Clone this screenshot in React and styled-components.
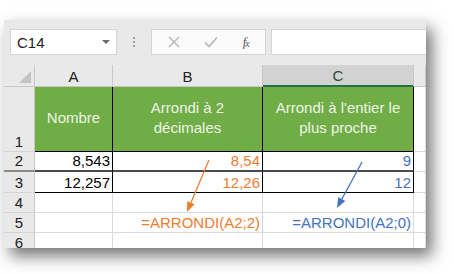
import React from 'react';
import styled, { createGlobalStyle } from 'styled-components';

const GlobalStyle = createGlobalStyle`
  html, body {
    margin: 0;
    padding: 0;
    background: #ffffff;
  }
  body {
    font-family: "Liberation Sans", Arial, sans-serif;
  }
`;

const Page = styled.div`
  width: 454px;
  height: 274px;
  padding: 20px 0 0 4px;
  box-sizing: border-box;
`;

const Window = styled.div`
  position: relative;
  width: 422px;
  height: 228px;
  background: #e9e9e9;
  box-shadow: 6px 8px 15px rgba(0, 0, 0, 0.55);
  overflow: hidden;
  display: flex;
  flex-direction: column;
`;

const FormulaBar = styled.div`
  height: 45px;
  box-sizing: border-box;
  padding: 9px 0 0 6px;
  display: flex;
  align-items: flex-start;
`;

const NameBox = styled.div`
  width: 107px;
  height: 26px;
  box-sizing: border-box;
  background: #ffffff;
  border: 1px solid #d4d4d4;
  display: flex;
  align-items: center;
  justify-content: space-between;
  padding: 0 6px 0 6px;
  font-size: 15px;
  color: #222;
`;

const DropArrow = styled.span`
  width: 0;
  height: 0;
  border-left: 4px solid transparent;
  border-right: 4px solid transparent;
  border-top: 4px solid #6a6a6a;
`;

const Grip = styled.div`
  width: 34px;
  height: 26px;
  display: flex;
  flex-direction: column;
  align-items: center;
  justify-content: center;
  gap: 2px;
  span {
    width: 2px;
    height: 2px;
    background: #9c9c9c;
  }
`;

const ButtonBox = styled.div`
  width: 115px;
  height: 26px;
  box-sizing: border-box;
  background: #fbfbfb;
  border: 1px solid #d4d4d4;
  display: flex;
  align-items: center;
  justify-content: space-around;
  padding: 0 4px;
`;

const Fx = styled.span`
  font-family: "Liberation Serif", "Times New Roman", serif;
  font-style: italic;
  font-size: 13px;
  color: #555;
  letter-spacing: -1px;
  sub {
    font-size: 10px;
    vertical-align: -1px;
  }
`;

const FormulaInput = styled.div`
  flex: 1;
  height: 26px;
  margin-left: 5px;
  box-sizing: border-box;
  background: #ffffff;
  border: 1px solid #d4d4d4;
  border-right: none;
`;

const Sheet = styled.div`
  position: relative;
  flex: 1;
  overflow: hidden;
  display: grid;
  grid-template-columns: 31px 78px 150px 151px 12px;
  grid-template-rows: 22px 65px 20px 21px 20px 20px 20px;
`;

const ColHead = styled.div`
  box-sizing: border-box;
  display: flex;
  align-items: center;
  justify-content: center;
  font-size: 15px;
  color: ${p => (p.$selected ? '#2a4a35' : '#222')};
  background: ${p => (p.$selected ? '#d2d2d2' : '#e9e9e9')};
  border-right: 1px solid #c8c8c8;
  border-bottom: ${p => (p.$selected ? '2px solid #217346' : '1px solid #c8c8c8')};
  padding-top: 1px;
`;

const Corner = styled.div`
  position: relative;
  box-sizing: border-box;
  background: #e9e9e9;
  border-right: 1px solid #c8c8c8;
  border-bottom: 1px solid #c8c8c8;
  &::after {
    content: '';
    position: absolute;
    right: 3px;
    bottom: 3px;
    width: 0;
    height: 0;
    border-left: 12px solid transparent;
    border-bottom: 12px solid #c4c4c4;
  }
`;

const RowHead = styled.div`
  box-sizing: border-box;
  display: flex;
  align-items: flex-end;
  justify-content: center;
  font-size: 15px;
  line-height: 17px;
  padding-bottom: 1px;
  color: #222;
  background: #e9e9e9;
  border-right: 1px solid #c8c8c8;
  border-bottom: ${p => (p.$thick ? '2px solid #8a8a8a' : '1px solid #d4d4d4')};
`;

const Cell = styled.div`
  box-sizing: border-box;
  display: flex;
  align-items: flex-end;
  justify-content: flex-end;
  padding: 0 2px 1px 2px;
  font-size: 15px;
  line-height: 17px;
  white-space: nowrap;
  background: #ffffff;
  color: ${p => p.$color || '#000'};
  border-right: 1px solid ${p => (p.$table ? '#000' : '#dadada')};
  border-bottom: ${p => p.$bottom || '1px solid #dadada'};
`;

const TitleCell = styled.div`
  box-sizing: border-box;
  display: flex;
  align-items: center;
  justify-content: center;
  text-align: center;
  font-size: 15px;
  line-height: 20px;
  color: #eef4e6;
  background: #70ad47;
  border-right: 1px solid #000;
  border-bottom: 1px solid #000;
  padding-bottom: 2px;
`;

const Arrows = styled.svg`
  position: absolute;
  left: 0;
  top: 0;
  pointer-events: none;
`;

const ORANGE = '#ed7d31';
const BLUE = '#4472c4';

const rows = [
  { n: '2', a: '8,543', b: '8,54', c: '9' },
  { n: '3', a: '12,257', b: '12,26', c: '12' },
];

function Arrow({ x1, y1, x2, y2, color }) {
  const ang = Math.atan2(y2 - y1, x2 - x1);
  const len = 10;
  const w = 4;
  const bx = x2 - len * Math.cos(ang);
  const by = y2 - len * Math.sin(ang);
  const px = -Math.sin(ang) * w;
  const py = Math.cos(ang) * w;
  return (
    <g>
      <line x1={x1} y1={y1} x2={bx} y2={by} stroke={color} strokeWidth="1.3" />
      <polygon points={`${x2},${y2} ${bx + px},${by + py} ${bx - px},${by - py}`} fill={color} />
    </g>
  );
}

export default function App() {
  return (
    <>
      <GlobalStyle />
      <Page>
        <Window>
          <FormulaBar>
            <NameBox>
              C14
              <DropArrow />
            </NameBox>
            <Grip>
              <span />
              <span />
              <span />
            </Grip>
            <ButtonBox>
              <svg width="12" height="12" viewBox="0 0 12 12">
                <path d="M1 1L11 11M11 1L1 11" stroke="#b5b5b5" strokeWidth="1.4" />
              </svg>
              <svg width="14" height="12" viewBox="0 0 14 12">
                <path d="M1 6.5L5 10.5L13 1.5" stroke="#b5b5b5" strokeWidth="1.6" fill="none" />
              </svg>
              <Fx>f<sub>x</sub></Fx>
            </ButtonBox>
            <FormulaInput />
          </FormulaBar>

          <Sheet>
            <Corner />
            <ColHead>A</ColHead>
            <ColHead>B</ColHead>
            <ColHead $selected>C</ColHead>
            <ColHead />

            <RowHead>1</RowHead>
            <TitleCell>Nombre</TitleCell>
            <TitleCell>Arrondi à 2<br />décimales</TitleCell>
            <TitleCell>Arrondi à l'entier le<br />plus proche</TitleCell>
            <Cell />

            {rows.map((r, i) => {
              const bottom = i === 0 ? '2px solid #4a4a4a' : '1px solid #000';
              return (
                <React.Fragment key={r.n}>
                  <RowHead $thick={i === 0}>{r.n}</RowHead>
                  <Cell $table $bottom={bottom}>{r.a}</Cell>
                  <Cell $table $bottom={bottom} $color={ORANGE}>{r.b}</Cell>
                  <Cell $table $bottom={bottom} $color={BLUE}>{r.c}</Cell>
                  <Cell />
                </React.Fragment>
              );
            })}

            <RowHead>4</RowHead>
            <Cell />
            <Cell />
            <Cell />
            <Cell />

            <RowHead>5</RowHead>
            <Cell />
            <Cell $color={ORANGE}>=ARRONDI(A2;2)</Cell>
            <Cell $color={BLUE}>=ARRONDI(A2;0)</Cell>
            <Cell />

            <RowHead>6</RowHead>
            <Cell />
            <Cell />
            <Cell />
            <Cell />

            <Arrows width="422" height="183" viewBox="0 0 422 183">
              <Arrow x1={205} y1={95} x2={183} y2={147} color={ORANGE} />
              <Arrow x1={358} y1={97} x2={333} y2={143} color={BLUE} />
            </Arrows>
          </Sheet>
        </Window>
      </Page>
    </>
  );
}
